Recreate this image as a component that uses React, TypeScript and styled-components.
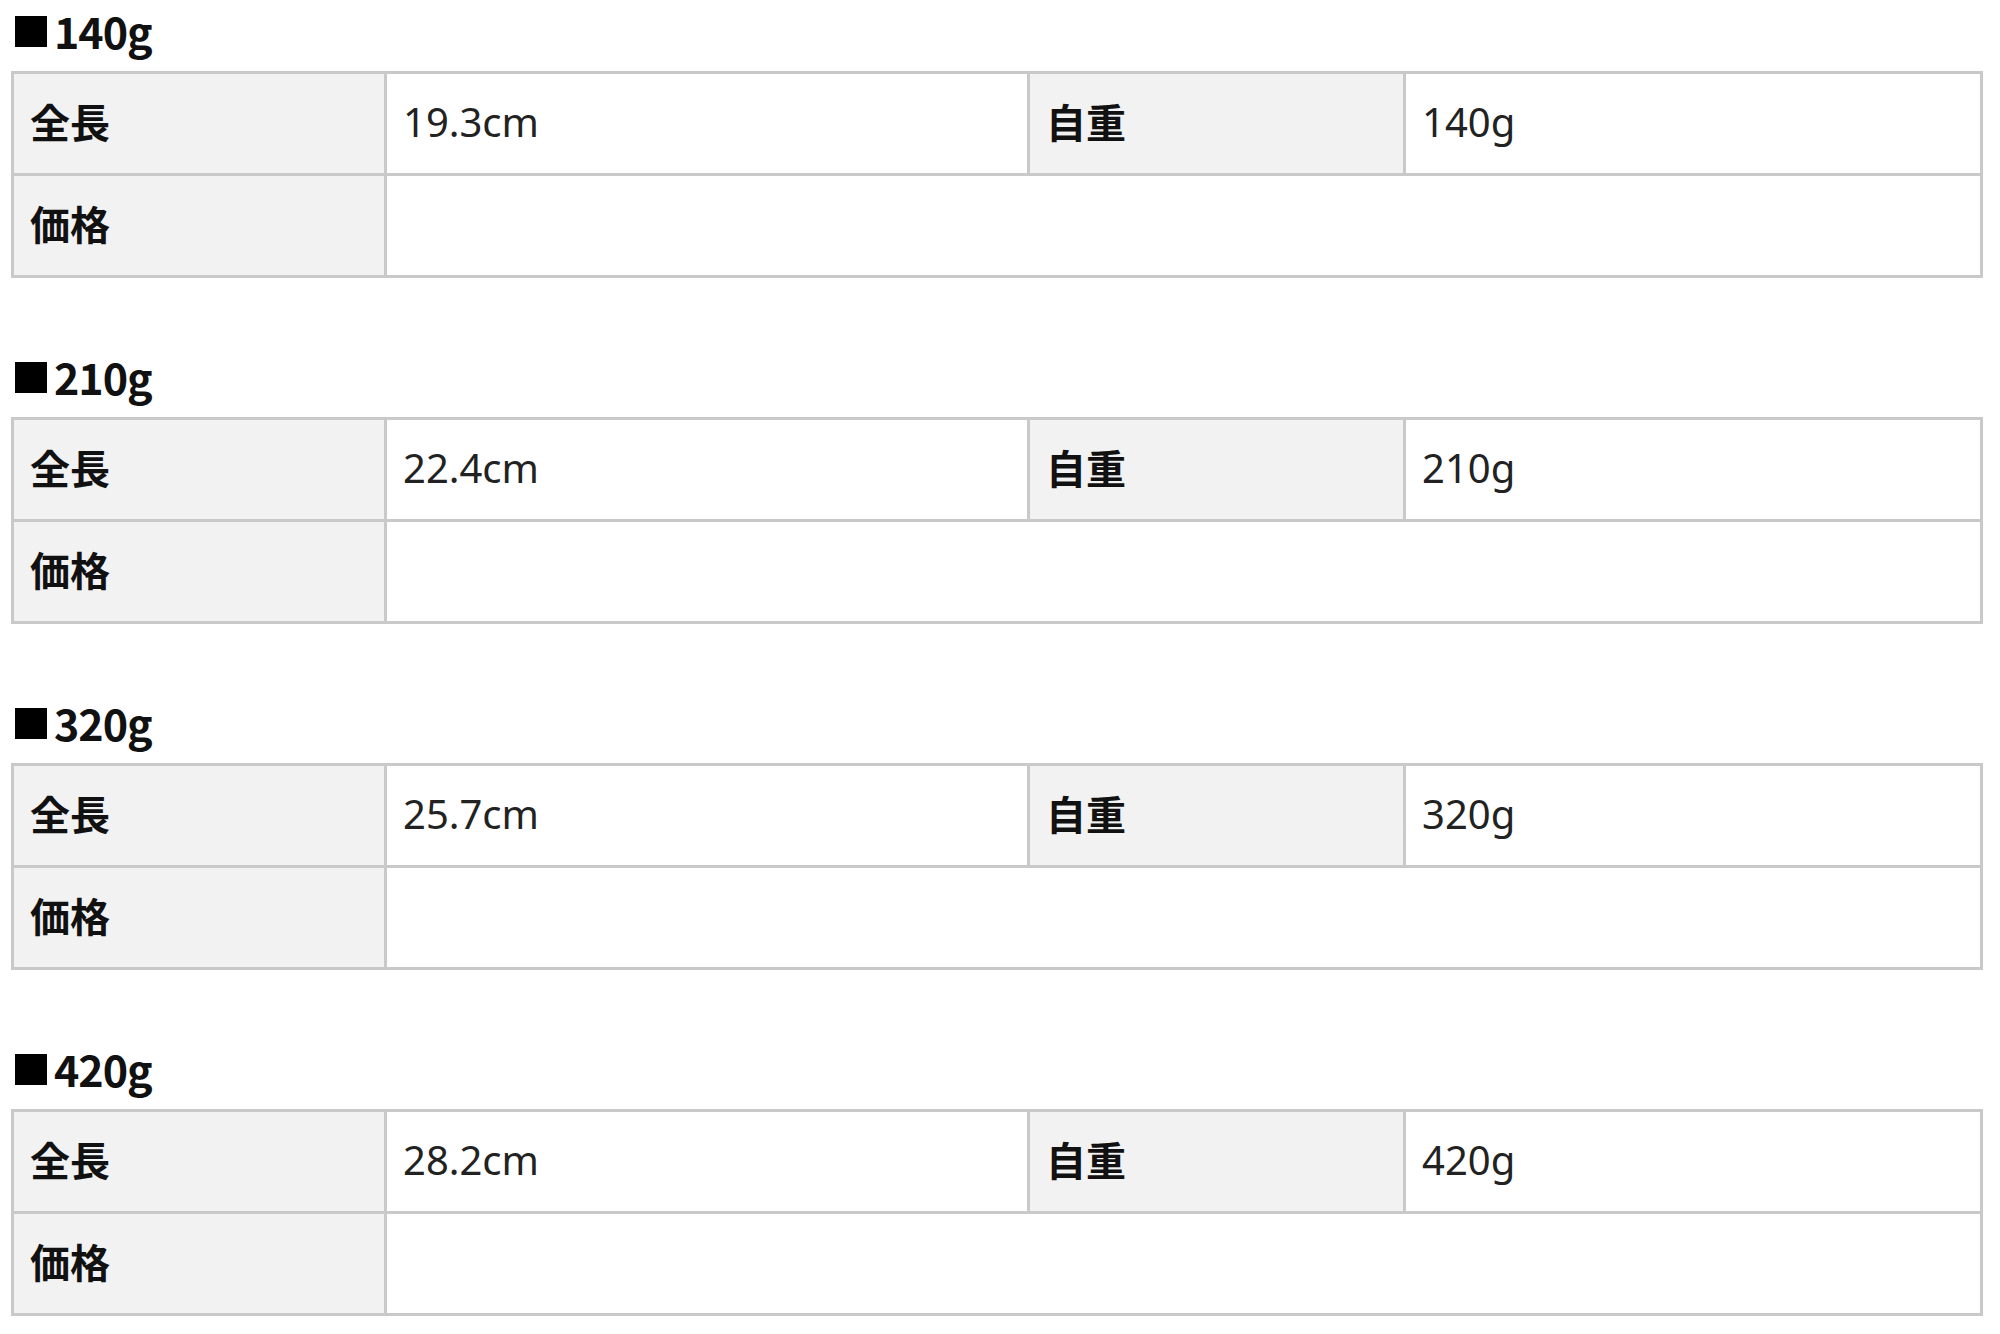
import React from "react";
import styled, { createGlobalStyle } from "styled-components";

const GlobalStyle = createGlobalStyle`
  html, body {
    margin: 0;
    padding: 0;
    background: #ffffff;
  }
  body {
    font-family: "Noto Sans CJK JP", "Noto Sans", sans-serif;
    color: #222222;
  }
`;

const Page = styled.div`
  display: flex;
  flex-direction: column;
  gap: 68px;
  padding: 0 18px 0 11px;
`;

const Section = styled.section`
  display: flex;
  flex-direction: column;
`;

const Title = styled.h2`
  margin: 0 0 5px 0;
  height: 66px;
  box-sizing: border-box;
  padding-bottom: 6px;
  display: flex;
  align-items: center;
  font-family: "Noto Sans CJK JP", "Noto Sans", sans-serif;
  font-size: 43px;
  font-weight: 700;
  line-height: 1;
  color: #111111;
  letter-spacing: -1px;
`;

const Square = styled.span`
  display: inline-block;
  width: 32px;
  height: 31px;
  background: #000000;
  margin: 0 7px 0 4px;
  align-self: center;
  transform: translateY(1px);
`;

const Grid = styled.div`
  display: grid;
  width: 1972px;
  box-sizing: border-box;
  grid-template-columns: 370px 640px 373px 574px;
  grid-auto-rows: 99px;
  gap: 3px;
  padding: 3px;
  background: #c9c9c9;
`;

const Cell = styled.div<{ $head?: boolean; $span?: number }>`
  display: flex;
  align-items: center;
  box-sizing: border-box;
  padding: 0 0 5px ${(p) => (p.$head ? "16px" : "16px")};
  background: ${(p) => (p.$head ? "#f2f2f2" : "#ffffff")};
  grid-column: ${(p) => (p.$span ? `span ${p.$span}` : "auto")};
  font-family: ${(p) =>
    p.$head
      ? `"Noto Sans CJK JP", sans-serif`
      : `"Noto Sans", "Noto Sans CJK JP", sans-serif`};
  font-size: 40px;
  font-weight: ${(p) => (p.$head ? 700 : 400)};
  color: ${(p) => (p.$head ? "#111111" : "#222222")};
`;

type Item = { weight: string; length: string };

const items: Item[] = [
  { weight: "140g", length: "19.3cm" },
  { weight: "210g", length: "22.4cm" },
  { weight: "320g", length: "25.7cm" },
  { weight: "420g", length: "28.2cm" },
];

export default function App() {
  return (
    <>
      <GlobalStyle />
      <Page>
        {items.map((it) => (
          <Section key={it.weight}>
            <Title>
              <Square />
              {it.weight}
            </Title>
            <Grid>
              <Cell $head>全長</Cell>
              <Cell>{it.length}</Cell>
              <Cell $head>自重</Cell>
              <Cell>{it.weight}</Cell>
              <Cell $head>価格</Cell>
              <Cell $span={3}></Cell>
            </Grid>
          </Section>
        ))}
      </Page>
    </>
  );
}
